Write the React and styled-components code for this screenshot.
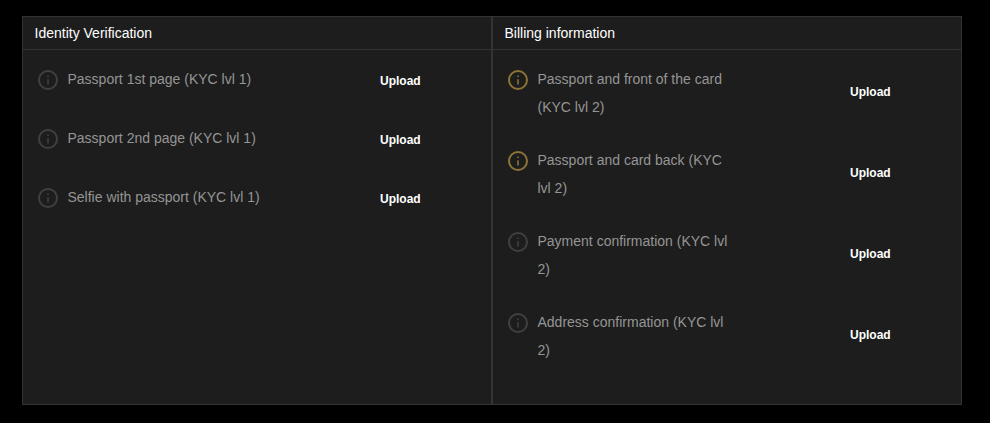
import styled, { createGlobalStyle } from 'styled-components'

const GlobalStyle = createGlobalStyle`
  html, body {
    margin: 0;
    background: #000;
  }
  body {
    font-family: "Liberation Sans", Arial, sans-serif;
  }
`

const Page = styled.div`
  width: 990px;
  height: 423px;
  box-sizing: border-box;
  padding: 16px 28px 18px 22px;
`

const Panels = styled.div`
  display: grid;
  grid-template-columns: 470px 470px;
  height: 100%;
`

const Panel = styled.section`
  border: 1px solid #333;
  background: #1d1d1d;
  box-sizing: border-box;
  min-width: 0;
`

const Header = styled.h2`
  margin: 0;
  height: 32px;
  padding-left: 11.5px;
  border-bottom: 1px solid #333;
  font-size: 14px;
  font-weight: 400;
  line-height: 32px;
  color: #fff;
`

const Rows = styled.div`
  display: flex;
  flex-direction: column;
  gap: 25px;
  padding: 15px 0 0 15px;
`

const Row = styled.div`
  display: flex;
  align-items: flex-start;
  min-height: 34px;
`

const IconSlot = styled.div`
  flex: none;
  width: 20px;
  height: 20px;
  margin: 5px 9.5px 0 0;
  color: ${(props) => (props.$active ? '#8c7336' : '#404040')};
`

const Label = styled.div`
  width: 200px;
  flex: none;
  font-size: 14px;
  line-height: 28px;
  color: #959595;
`

const UploadButton = styled.button`
  align-self: center;
  margin: 0 0 3px 112.5px;
  padding: 0;
  border: 0;
  background: none;
  font-family: inherit;
  font-size: 12px;
  font-weight: 700;
  line-height: 14px;
  color: #fff;
`

const InfoIcon = () => (
  <svg width="20" height="20" viewBox="0 0 20 20" fill="none" stroke="currentColor" strokeWidth="2">
    <circle cx="10" cy="10" r="9" />
    <path d="M10 9.2v5.2" strokeWidth="1.6" />
    <path d="M10 5.6v1.4" strokeWidth="1.6" />
  </svg>
)

const identityDocs = [
  { label: 'Passport 1st page (KYC lvl 1)' },
  { label: 'Passport 2nd page (KYC lvl 1)' },
  { label: 'Selfie with passport (KYC lvl 1)' },
]

const billingDocs = [
  { label: 'Passport and front of the card (KYC lvl 2)', active: true },
  { label: 'Passport and card back (KYC lvl 2)', active: true },
  { label: 'Payment confirmation (KYC lvl 2)' },
  { label: 'Address confirmation (KYC lvl 2)' },
]

const DocPanel = ({ title, docs }) => (
  <Panel>
    <Header>{title}</Header>
    <Rows>
      {docs.map((doc) => (
        <Row key={doc.label}>
          <IconSlot $active={doc.active}>
            <InfoIcon />
          </IconSlot>
          <Label>{doc.label}</Label>
          <UploadButton>Upload</UploadButton>
        </Row>
      ))}
    </Rows>
  </Panel>
)

const App = () => (
  <Page>
    <GlobalStyle />
    <Panels>
      <DocPanel title="Identity Verification" docs={identityDocs} />
      <DocPanel title="Billing information" docs={billingDocs} />
    </Panels>
  </Page>
)

export default App
